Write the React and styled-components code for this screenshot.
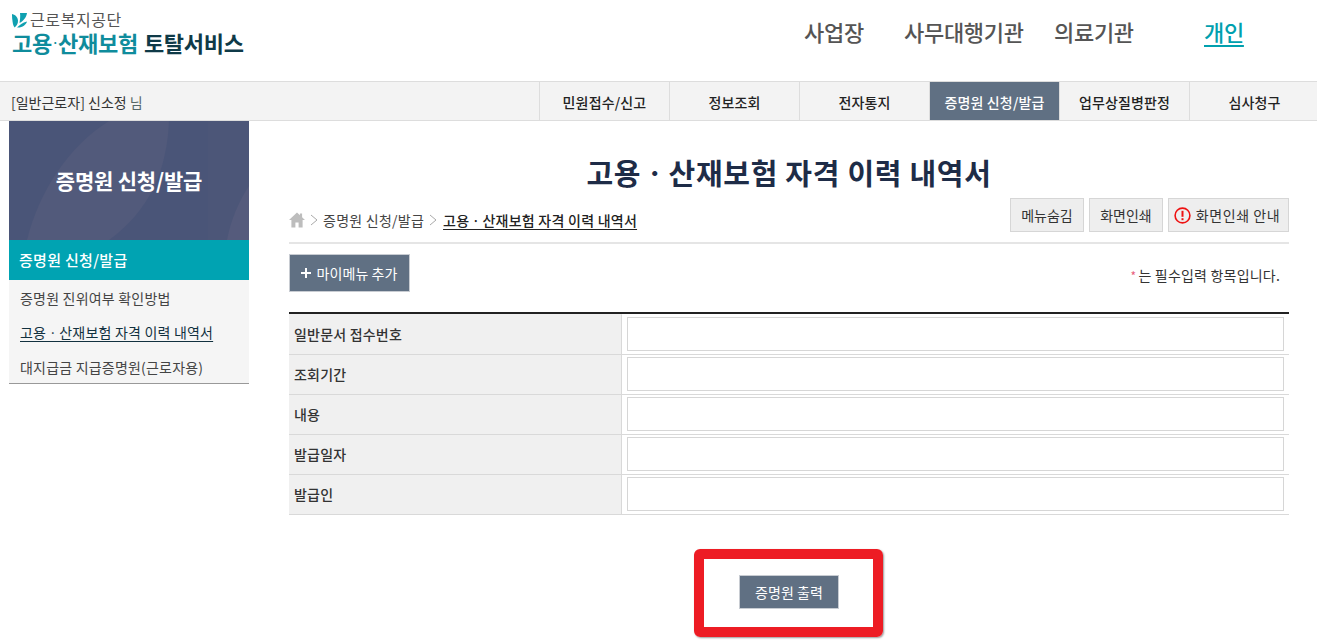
import React from 'react';
import styled, { createGlobalStyle } from 'styled-components';

const GlobalStyle = createGlobalStyle`
  html, body {
    margin: 0;
    padding: 0;
    background: #fff;
    overflow: hidden;
  }
  body {
    font-family: "Noto Sans CJK KR", "Noto Sans", sans-serif;
    color: #333;
  }
  * {
    box-sizing: border-box;
  }
`;

const Page = styled.div`
  width: 1317px;
  height: 644px;
  overflow: hidden;
`;

const Header = styled.header`
  height: 82px;
  border-bottom: 1px solid #ddd;
  display: flex;
  justify-content: space-between;
`;

const Logo = styled.div`
  padding: 9px 0 0 12px;
  display: flex;
  flex-direction: column;
`;

const AgencyRow = styled.div`
  display: flex;
  align-items: center;
  gap: 3px;
  height: 21px;
  font-size: 16px;
  line-height: 21px;
  color: #555;
  letter-spacing: 0.6px;
`;

const ServiceName = styled.div`
  display: flex;
  gap: 6px;
  height: 24px;
  font-size: 22px;
  line-height: 24px;
  font-weight: 700;
  color: #0f3a48;
  letter-spacing: -0.3px;
  white-space: nowrap;
`;

const Teal = styled.span`
  display: flex;
  align-items: center;
  color: #0f8c9c;
`;

const LogoDot = styled.span`
  font-size: 11px;
`;

const TopNav = styled.nav`
  display: flex;
  padding: 16px 0 0 0;
  width: 513px;
`;

const TopLink = styled.a`
  width: ${p => p.$w}px;
  font-size: 22px;
  line-height: 30px;
  height: 32px;
  font-weight: 500;
  white-space: nowrap;
  letter-spacing: -0.3px;
  color: ${p => (p.$active ? '#00a0ae' : '#555')};
  text-decoration: ${p => (p.$active ? 'underline' : 'none')};
  text-underline-offset: 4px;
`;

const UserBar = styled.div`
  height: 39px;
  background: #f3f3f3;
  border-bottom: 1px solid #ddd;
  display: flex;
  justify-content: space-between;
`;

const UserName = styled.div`
  padding-left: 11px;
  font-size: 14px;
  line-height: 40px;
  color: #333;
`;

const Sir = styled.span`
  color: #566;
`;

const Tabs = styled.ul`
  display: flex;
  margin: 0;
  padding: 0;
  list-style: none;
  width: 778px;
`;

const Tab = styled.li`
  width: 130px;
  flex: none;
  text-align: center;
  font-size: 14px;
  line-height: 40px;
  height: 38px;
  font-weight: 500;
  letter-spacing: 0.15px;
  border-left: 1px solid #ddd;
  color: ${p => (p.$active ? '#fff' : '#222')};
  background: ${p => (p.$active ? '#607083' : 'transparent')};
`;

const Body = styled.div`
  display: flex;
  padding-left: 9px;
  gap: 40px;
`;

const Sidebar = styled.aside`
  width: 240px;
  flex: none;
`;

const SideTitle = styled.div`
  position: relative;
  height: 119px;
  padding-bottom: 1px;
  background: #4a5578;
  color: #fff;
  font-size: 21px;
  font-weight: 700;
  letter-spacing: -0.2px;
  display: flex;
  align-items: center;
  justify-content: center;
  overflow: hidden;
`;

const SideTitleText = styled.span`
  position: relative;
`;

const SideArt = styled.svg`
  position: absolute;
  inset: 0;
`;

const SideHead = styled.div`
  height: 40px;
  padding-left: 10px;
  background: #00a3b2;
  color: #fff;
  font-size: 15px;
  font-weight: 500;
  line-height: 40px;
  letter-spacing: 0.3px;
`;

const SideList = styled.ul`
  margin: 0;
  padding: 1px 0 0 0;
  list-style: none;
  height: 104px;
  background: #f5f5f5;
  border-bottom: 1px solid #999;
`;

const SideItem = styled.li`
  height: 34.25px;
  padding-left: 11px;
  font-size: 14px;
  line-height: 34px;
  letter-spacing: 0.2px;
  color: ${p => (p.$current ? '#12313f' : '#444')};
  white-space: nowrap;
  & > span {
    text-decoration: ${p => (p.$current ? 'underline' : 'none')};
    text-underline-offset: 3px;
  }
`;

const Main = styled.main`
  width: 1000px;
  flex: none;
`;

const PageTitle = styled.h1`
  margin: 0;
  height: 77px;
  padding-top: 30px;
  font-size: 29px;
  line-height: 42px;
  font-weight: 700;
  text-align: center;
  color: #1e2c47;
  letter-spacing: 0.7px;
`;

const CrumbRow = styled.div`
  height: 46px;
  border-bottom: 2px solid #e5e5e5;
  display: flex;
  justify-content: space-between;
`;

const Crumbs = styled.div`
  display: flex;
  align-items: center;
  height: 43px;
  font-size: 14px;
  letter-spacing: 0.25px;
  color: #444;
  gap: 5px;
`;

const CrumbCurrent = styled.span`
  margin-left: 1px;
  color: #222;
  font-weight: 500;
  text-decoration: underline;
  text-underline-offset: 3px;
`;

const ToolGroup = styled.div`
  display: flex;
  gap: 5px;
  height: 34px;
`;

const ToolButton = styled.button`
  width: ${p => p.$w}px;
  height: 34px;
  padding: 0 ${p => (p.$hasIcon ? '3px' : '0')} 0 0;
  display: flex;
  align-items: center;
  justify-content: center;
  gap: 5px;
  font-family: inherit;
  font-size: 14px;
  letter-spacing: ${p => (p.$hasIcon ? '0.6px' : '0')};
  color: #333;
  background: #eee;
  border: 1px solid #d6d6d6;
`;

const ActionRow = styled.div`
  height: 68px;
  padding: 10px 9px 0 0;
  display: flex;
  justify-content: space-between;
  align-items: flex-start;
`;

const SolidButton = styled.button`
  height: ${p => p.$h}px;
  width: ${p => p.$w}px;
  padding: 0;
  display: flex;
  align-items: center;
  justify-content: center;
  gap: 5px;
  font-family: inherit;
  font-size: 14px;
  letter-spacing: 0.1px;
  color: #fff;
  background: #607083;
  border: 1px solid #c8ccd2;
`;

const RequiredNote = styled.div`
  font-size: 14px;
  line-height: 42px;
  letter-spacing: 0.2px;
  color: #333;
`;

const Star = styled.span`
  color: #e8607e;
  font-size: 12px;
  margin-right: 2px;
`;

const FormTable = styled.div`
  border-top: 2px solid #222;
  border-bottom: 1px solid #d9d9d9;
  display: grid;
  grid-template-columns: 333px 1fr;
`;

const LabelCell = styled.div`
  height: 40px;
  padding-left: 5px;
  background: #f0f0f0;
  border-top: 1px solid ${p => (p.$first ? 'transparent' : '#d9d9d9')};
  border-right: 1px solid #d9d9d9;
  font-size: 14px;
  font-weight: 500;
  line-height: 39px;
  letter-spacing: 0.2px;
  color: #333;
`;

const FieldCell = styled.div`
  height: 40px;
  padding: 2px 5px 0 5px;
  border-top: 1px solid ${p => (p.$first ? 'transparent' : '#d9d9d9')};
`;

const FieldBox = styled.input`
  display: block;
  width: 100%;
  height: 34px;
  background: #fff;
  border: 1px solid #d6d6d6;
  outline: none;
`;

const Actions = styled.div`
  display: flex;
  justify-content: center;
  padding: 34px 1px 0 0;
`;

const Highlight = styled.div`
  width: 189px;
  height: 88px;
  padding: 16px 34px 0 35px;
  border: 10px solid #ed1c24;
  border-radius: 6px;
  box-shadow: 1px 1px 2px rgba(0, 0, 0, 0.4);
`;

const HomeIcon = () => (
  <svg width="16" height="16" viewBox="0 0 16 16" aria-hidden="true">
    <path d="M8 .5 0 8h2.400v7.500h4V10.500h3.200v5h4V8H16l-2.900-2.700V1.600h-2.200v1.600Z" fill="#bdbdbd" />
  </svg>
);

const Chevron = () => (
  <svg width="8" height="12" viewBox="0 0 8 12" aria-hidden="true">
    <path d="M1 1l6 5-6 5" fill="none" stroke="#aaa" strokeWidth="1" />
  </svg>
);

const AlertIcon = () => (
  <svg width="17" height="17" viewBox="0 0 17 17" aria-hidden="true">
    <circle cx="8.500" cy="8.500" r="7.400" fill="none" stroke="#ee1111" strokeWidth="1.600" />
    <path d="M8.500 3.800v6" stroke="#ee1111" strokeWidth="2" />
    <path d="M8.500 11.200v2" stroke="#ee1111" strokeWidth="2" />
  </svg>
);

const LogoMark = () => (
  <svg width="15" height="16" viewBox="0 0 15 16" aria-hidden="true">
    <path d="M0 2C4 3 6 6 6 9 6 12 4.500 14 2.500 15.500 0.500 13 0 6 0 2Z" fill="#10a0b0" />
    <path d="M8 1H15C14.500 5 11.500 9 7.500 11 8 8 8.500 4 8 1Z" fill="#10a0b0" />
    <path d="M5 15.500C7.500 13 10.500 10.500 15 9.500 14 13 10 16 5 15.500Z" fill="#10a0b0" />
  </svg>
);

const rows = ['일반문서 접수번호', '조회기간', '내용', '발급일자', '발급인'];
const tabs = ['민원접수/신고', '정보조회', '전자통지', '증명원 신청/발급', '업무상질병판정', '심사청구'];
const topLinks = [
  { label: '사업장', w: 100 },
  { label: '사무대행기관', w: 150 },
  { label: '의료기관', w: 150 },
  { label: '개인', w: 113, active: true },
];

export default function App() {
  return (
    <Page>
      <GlobalStyle />
      <Header>
        <Logo>
          <AgencyRow>
            <LogoMark />
            근로복지공단
          </AgencyRow>
          <ServiceName>
            <Teal>고용<LogoDot>·</LogoDot>산재보험</Teal>
            <span>토탈서비스</span>
          </ServiceName>
        </Logo>
        <TopNav>
          {topLinks.map(link => (
            <TopLink key={link.label} $w={link.w} $active={link.active}>
              {link.label}
            </TopLink>
          ))}
        </TopNav>
      </Header>
      <UserBar>
        <UserName>
          [일반근로자] 신소정 <Sir>님</Sir>
        </UserName>
        <Tabs>
          {tabs.map((tab, i) => (
            <Tab key={tab} $active={i === 3}>
              {tab}
            </Tab>
          ))}
        </Tabs>
      </UserBar>
      <Body>
        <Sidebar>
          <SideTitle>
            <SideArt width="240" height="119" viewBox="0 0 240 119" aria-hidden="true">
              <path d="M18 119C30 70 60 25 100 0H160C158 50 140 90 100 119Z" fill="#525a7b" />
              <path d="M199 0H240V119H199Z" fill="#4c5678" />
              <path d="M218 119C222 98 230 80 240 65V119Z" fill="#555b7c" />
            </SideArt>
            <SideTitleText>증명원 신청/발급</SideTitleText>
          </SideTitle>
          <SideHead>증명원 신청/발급</SideHead>
          <SideList>
            <SideItem><span>증명원 진위여부 확인방법</span></SideItem>
            <SideItem $current><span>고용ㆍ산재보험 자격 이력 내역서</span></SideItem>
            <SideItem><span>대지급금 지급증명원(근로자용)</span></SideItem>
          </SideList>
        </Sidebar>
        <Main>
          <PageTitle>고용ㆍ산재보험 자격 이력 내역서</PageTitle>
          <CrumbRow>
            <Crumbs>
              <HomeIcon />
              <Chevron />
              <span>증명원 신청/발급</span>
              <Chevron />
              <CrumbCurrent>고용ㆍ산재보험 자격 이력 내역서</CrumbCurrent>
            </Crumbs>
            <ToolGroup>
              <ToolButton $w={74}>메뉴숨김</ToolButton>
              <ToolButton $w={74}>화면인쇄</ToolButton>
              <ToolButton $w={121} $hasIcon>
                <AlertIcon />
                화면인쇄 안내
              </ToolButton>
            </ToolGroup>
          </CrumbRow>
          <ActionRow>
            <SolidButton $w={121} $h={38}>
              <svg width="10" height="10" viewBox="0 0 10 10" aria-hidden="true">
                <path d="M5 0v10M0 5h10" stroke="#fff" strokeWidth="2" />
              </svg>
              마이메뉴 추가
            </SolidButton>
            <RequiredNote>
              <Star>*</Star>는 필수입력 항목입니다.
            </RequiredNote>
          </ActionRow>
          <FormTable>
            {rows.map((row, i) => (
              <React.Fragment key={row}>
                <LabelCell $first={i === 0}>{row}</LabelCell>
                <FieldCell $first={i === 0}>
                  <FieldBox readOnly aria-label={row} />
                </FieldCell>
              </React.Fragment>
            ))}
          </FormTable>
          <Actions>
            <Highlight>
              <SolidButton $w={100} $h={34}>증명원 출력</SolidButton>
            </Highlight>
          </Actions>
        </Main>
      </Body>
    </Page>
  );
}
